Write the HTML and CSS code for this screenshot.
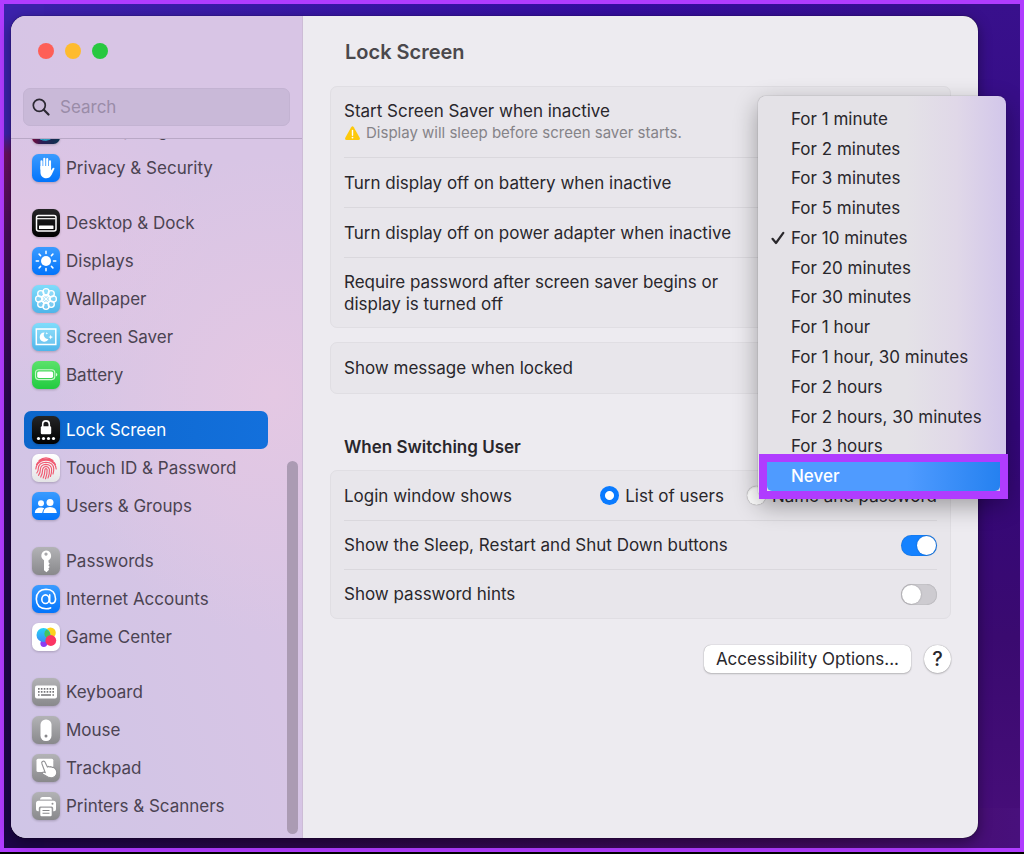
FILE: index.html
```html
<!DOCTYPE html>
<html lang="en">
<head>
<meta charset="utf-8">
<meta name="viewport" content="width=device-width, initial-scale=1">
<title>Lock Screen</title>
<link rel="stylesheet" href="styles.css">
</head>
<body>
<svg class="defs" width="0" height="0" aria-hidden="true">
  <defs>
    <linearGradient id="blue" x1="0" y1="0" x2="0" y2="1"><stop offset="0" stop-color="#3a9bff"/><stop offset="1" stop-color="#0274fb"/></linearGradient>
    <linearGradient id="cyan" x1="0" y1="0" x2="0" y2="1"><stop offset="0" stop-color="#80dcfb"/><stop offset="1" stop-color="#4fb5ea"/></linearGradient>
    <linearGradient id="green" x1="0" y1="0" x2="0" y2="1"><stop offset="0" stop-color="#5be26b"/><stop offset="1" stop-color="#22cb40"/></linearGradient>
    <linearGradient id="gray" x1="0" y1="0" x2="0" y2="1"><stop offset="0" stop-color="#b3b3b6"/><stop offset="1" stop-color="#89898c"/></linearGradient>
    <linearGradient id="black" x1="0" y1="0" x2="0" y2="1"><stop offset="0" stop-color="#252527"/><stop offset="1" stop-color="#000"/></linearGradient>
    <linearGradient id="white" x1="0" y1="0" x2="0" y2="1"><stop offset="0" stop-color="#fff"/><stop offset="1" stop-color="#e4e4e6"/></linearGradient>
    <linearGradient id="siri" x1="0" y1="0" x2="1" y2="0"><stop offset="0" stop-color="#7a0c3c"/><stop offset=".35" stop-color="#2b1b55"/><stop offset="1" stop-color="#0c3350"/></linearGradient>
    <linearGradient id="gc1" x1="0" y1="0" x2="0" y2="1"><stop offset="0" stop-color="#25d4f5"/><stop offset="1" stop-color="#3b8bf5"/></linearGradient>
  </defs>
</svg>
<div class="desktop">
  <div class="window">
    <aside class="sidebar">
      <header class="sidebar-head">
        <div class="lights">
          <button class="light red" aria-label="Close"></button>
          <button class="light yellow" aria-label="Minimize"></button>
          <button class="light green" aria-label="Zoom"></button>
        </div>
        <label class="search">
          <svg width="18" height="18" viewBox="0 0 18 18" fill="none" stroke="#2c2832" stroke-linecap="round" aria-hidden="true"><circle cx="7.3" cy="7.3" r="6" stroke-width="1.7"/><path d="M11.8 11.8 16.5 16.5" stroke-width="2.2"/></svg>
          <input type="search" placeholder="Search" aria-label="Search">
        </label>
      </header>
      <nav class="nav">
        <div class="group">
          <a class="item" href="#"><svg class="icon" viewBox="0 0 28 28"><rect width="28" height="28" rx="6.500" fill="url(#siri)"/><circle cx="14" cy="14" r="10" fill="#183c78"/><path d="M6 20q8 8 16-1M8 23q6 3 12-1" stroke="#2fa6c8" fill="none"/></svg>Siri &amp; Spotlight</a>
          <a class="item" href="#"><svg class="icon" viewBox="0 0 28 28"><rect width="28" height="28" rx="6.500" fill="url(#blue)"/><g stroke="#fff" stroke-width="2.100" stroke-linecap="round"><path d="M9.500 15V7.200M12.300 13V4.800M15.200 13V5M18 14V7.200"/></g><path d="M8.450 12h10.600v4.500l1.500-2.200c.8-1.200 2.300-.6 1.800.7l-2.700 5.800c-1.300 2.500-3 3.500-5.400 3.500-3.600 0-5.800-2.500-5.800-6z" fill="#fff"/></svg>Privacy &amp; Security</a>
        </div>
        <div class="group">
          <a class="item" href="#"><svg class="icon" viewBox="0 0 28 28"><rect width="28" height="28" rx="6.500" fill="url(#black)"/><rect x="4.500" y="6.500" width="19.500" height="15.500" rx="2" fill="none" stroke="#fff" stroke-width="1.500"/><path d="M5 9.700h18.500" stroke="#fff" stroke-width="1.200"/><rect x="7" y="16.500" width="14.500" height="3.500" rx=".6" fill="#fff"/></svg>Desktop &amp; Dock</a>
          <a class="item" href="#"><svg class="icon" viewBox="0 0 28 28"><rect width="28" height="28" rx="6.500" fill="url(#blue)"/><circle cx="14" cy="14" r="5" fill="#fff"/><g stroke="#fff" stroke-width="1.500" stroke-linecap="round"><path d="M14 4.200v2.300M14 21.500v2.300M4.200 14h2.300M21.500 14h2.300M7.100 7.100l1.500 1.500M19.400 19.400l1.500 1.500M7.100 20.900l1.500-1.500M19.400 8.600l1.500-1.500"/></g></svg>Displays</a>
          <a class="item" href="#"><svg class="icon" viewBox="0 0 28 28"><rect width="28" height="28" rx="6.500" fill="url(#cyan)"/><g fill="#ffffff30" stroke="#fff" stroke-width="1.300"><circle cx="14" cy="6.700" r="3.100"/><circle cx="19.200" cy="8.800" r="3.100"/><circle cx="21.300" cy="14" r="3.100"/><circle cx="19.200" cy="19.200" r="3.100"/><circle cx="14" cy="21.300" r="3.100"/><circle cx="8.800" cy="19.200" r="3.100"/><circle cx="6.700" cy="14" r="3.100"/><circle cx="8.800" cy="8.800" r="3.100"/><circle cx="14" cy="14" r="3.500"/><path d="M14 9v10M9 14h10M10.500 10.500l7 7M17.500 10.500l-7 7" stroke-width=".9"/></g></svg>Wallpaper</a>
          <a class="item" href="#"><svg class="icon" viewBox="0 0 28 28"><rect width="28" height="28" rx="6.500" fill="url(#cyan)"/><rect x="4.300" y="6" width="19.500" height="15.500" fill="#ffffff20" stroke="#fff" stroke-width="1.500"/><path d="M12.500 9.500a4.600 4.600 0 1 0 4 6.500 4.200 4.200 0 0 1-4-6.500z" fill="#fff"/><path d="M18.700 11.700l.7 1.700 1.700.7-1.700.7-.7 1.700-.7-1.700-1.700-.7 1.700-.7zM14.800 9l.4.900.9.4-.9.400-.4.900-.4-.9-.9-.4.900-.4z" fill="#fff"/></svg>Screen Saver</a>
          <a class="item" href="#"><svg class="icon" viewBox="0 0 28 28"><rect width="28" height="28" rx="6.500" fill="url(#green)"/><rect x="3.500" y="8.800" width="19.300" height="9.800" rx="3" fill="none" stroke="#c9f6ce" stroke-width="1.100"/><rect x="5.200" y="10.400" width="15.900" height="6.600" rx="1.700" fill="#fff"/><path d="M24 12v3.400q1.300-.4 1.300-1.700T24 12z" fill="#d8f8dc"/></svg>Battery</a>
        </div>
        <div class="group">
          <a class="item active" href="#" aria-current="page"><svg class="icon" viewBox="0 0 28 28"><rect width="28" height="28" rx="6.500" fill="url(#black)"/><path d="M10.700 11V8.200a3.300 3.300 0 0 1 6.600 0V11" fill="none" stroke="#fff" stroke-width="1.600"/><rect x="8.800" y="10.300" width="10.400" height="8" rx="1.300" fill="#fff"/><g fill="#fff"><circle cx="6.500" cy="22.500" r="1.600"/><circle cx="11.500" cy="22.500" r="1.600"/><circle cx="16.500" cy="22.500" r="1.600"/><circle cx="21.500" cy="22.500" r="1.600"/></g></svg>Lock Screen</a>
          <a class="item" href="#"><svg class="icon" viewBox="0 0 28 28"><rect width="28" height="28" rx="6.500" fill="url(#white)"/><g fill="none" stroke="#f05a72" stroke-width="1.150" stroke-linecap="round"><path d="M7 6.500q7-5.500 14 0M4.500 10.500q1-2 3-3.300 6.500-4 13 0 2 1.300 3 3.300M3.800 15q0-3 2-5.200 3.500-3.600 8.200-3.600t8.200 3.600q2 2.200 2 5.200M4.800 19q1.600-2 1.500-4.500.4-6 7.700-6.200 7.300.2 7.700 6.200.2 2.500-.7 5.500M6.500 21.300q2-2.800 1.900-6.300.6-4.400 5.600-4.600 5 .2 5.600 4.600.2 4-1.200 7.500M8.700 23q2-3.500 1.900-7.500.6-2.800 3.400-3 2.800.2 3.400 3 .3 4.500-1.400 8.500M11.200 24q1.800-4 1.700-8.300.3-1 1.100-1.100.8.100 1.100 1.100.2 4.500-1.600 9"/></g></svg>Touch ID &amp; Password</a>
          <a class="item" href="#"><svg class="icon" viewBox="0 0 28 28"><rect width="28" height="28" rx="6.500" fill="url(#blue)"/><g fill="#fff"><circle cx="9" cy="11.300" r="3"/><path d="M2.800 21q.2-5.500 6.200-5.500 2 0 3.300.8Q10.500 18 10.200 21z"/><circle cx="18" cy="10.500" r="3.500"/><path d="M11.300 21q.3-6 6.700-6t6.800 6z"/></g></svg>Users &amp; Groups</a>
        </div>
        <div class="group">
          <a class="item" href="#"><svg class="icon" viewBox="0 0 28 28"><rect width="28" height="28" rx="6.500" fill="url(#gray)"/><path fill-rule="evenodd" d="M14 3.500a5.200 5.200 0 0 1 2.500 9.700v2.100l1.200 1.400-1.300 1.600 1.300 1.600-1.300 1.500.6 1.300-2.500 2.500-2.500-2v-10A5.200 5.200 0 0 1 14 3.500zm0 2a1.600 1.600 0 1 0 .01 0z" fill="#fff"/></svg>Passwords</a>
          <a class="item" href="#"><svg class="icon" viewBox="0 0 28 28"><rect width="28" height="28" rx="6.500" fill="url(#blue)"/><g fill="none" stroke="#fff" stroke-width="1.600" stroke-linecap="round"><ellipse cx="13.500" cy="14.200" rx="3.700" ry="4.300"/><path d="M17.700 9.900v6.300q.2 2.400 2.400 2.200 3.300-.4 3.500-4.500Q23.300 4.300 14 4.200 4.500 4.500 4.300 14q.2 9.300 9.800 9.700 2.400 0 4.500-.8"/></g></svg>Internet Accounts</a>
          <a class="item" href="#"><svg class="icon" viewBox="0 0 28 28"><rect width="28" height="28" rx="6.500" fill="#fff"/><circle cx="18.500" cy="9.800" r="5.300" fill="#fbd21d"/><circle cx="11.800" cy="20.500" r="3.400" fill="#8d3cf0"/><circle cx="11.500" cy="12" r="7" fill="url(#gc1)"/><path d="M14.500 6.500a7 7 0 0 1 3.600 7.500 6.500 6.500 0 0 1-3.600 1 5.300 5.300 0 0 1 0-8.500z" fill="#42c560"/><circle cx="18.800" cy="17.500" r="5.400" fill="#fb3564"/></svg>Game Center</a>
        </div>
        <div class="group">
          <a class="item" href="#"><svg class="icon" viewBox="0 0 28 28"><rect width="28" height="28" rx="6.500" fill="url(#gray)"/><rect x="3" y="7.500" width="22" height="13" rx="2" fill="#fff"/><path d="M6 10.900h16M6 13.900h16" stroke="#77777a" stroke-width="1.600" stroke-dasharray="1.600 1.280"/><path d="M6 17h1.600M9 17h10M20.400 17H22" stroke="#77777a" stroke-width="1.500"/></svg>Keyboard</a>
          <a class="item" href="#"><svg class="icon" viewBox="0 0 28 28"><rect width="28" height="28" rx="6.500" fill="url(#gray)"/><rect x="8.500" y="3.500" width="11" height="21.500" rx="5.200" fill="#fff"/><circle cx="14" cy="20" r="1.500" fill="#88888b"/></svg>Mouse</a>
          <a class="item" href="#"><svg class="icon" viewBox="0 0 28 28"><rect width="28" height="28" rx="6.500" fill="url(#gray)"/><rect x="4.500" y="4.800" width="16.800" height="13.200" rx="1.500" fill="#fff"/><path d="M10.500 7.500c1.300-.8 2.200 0 2.700 1l2.200 4.400 1-.5 1.300.5 1.200-.3 1.300.8 1.200-.1c2.500 1.500 3.800 4.400 3.100 7-1.500 3.700-5.200 4.200-8.700 2.600l-5.200-3c-.8-1.400.5-2.300 2.600-1.400L10 10c-.5-1-.3-2 .5-2.500z" fill="#fff" stroke="#929295" stroke-width="1.100"/></svg>Trackpad</a>
          <a class="item" href="#"><svg class="icon" viewBox="0 0 28 28"><rect width="28" height="28" rx="6.500" fill="url(#gray)"/><path d="M8 7.500q0-2.500 2.300-2.500h7.400Q20 5 20 7.500zM6.500 8.800h15q2.500 0 2.500 2.500v6q0 2-2 2h-.8v-3.200q0-1.500-1.500-1.500H8.300q-1.500 0-1.500 1.500v3.200H6q-2 0-2-2v-6q0-2.500 2.500-2.500z" fill="#fff"/><circle cx="20.500" cy="11.700" r="1" fill="#929295"/><rect x="8.300" y="15.700" width="11.400" height="8.500" rx="1.200" fill="#fff"/><path d="M10.500 18.500h7M10.500 21.300h7" stroke="#88888b" stroke-width="1.100"/></svg>Printers &amp; Scanners</a>
        </div>
      </nav>
      <div class="scrollbar"></div>
    </aside>
    <main class="main">
      <h1>Lock Screen</h1>
      <section class="panel">
        <div class="row tall">
          <div>
            <div class="label">Start Screen Saver when inactive</div>
            <div class="note"><svg width="17" height="15" viewBox="0 0 17 15" aria-hidden="true"><path d="M7.200 1.200q1.300-1.800 2.600 0l5.900 10.500q.8 2-1.300 2.300H2.600Q.5 13.700 1.300 11.700z" fill="#fdc90a"/><path d="M8.500 4.500v4.700" stroke="#fff" stroke-width="1.400" stroke-linecap="round"/><circle cx="8.500" cy="11.600" r=".9" fill="#fff"/></svg>Display will sleep before screen saver starts.</div>
          </div>
        </div>
        <div class="row">Turn display off on battery when inactive</div>
        <div class="row">Turn display off on power adapter when inactive</div>
        <div class="row tall"><div class="wrap">Require password after screen saver begins or display is turned off</div></div>
      </section>
      <section class="panel"><div class="row">Show message when locked</div></section>
      <h2>When Switching User</h2>
      <section class="panel compact">
        <div class="row"><span>Login window shows</span>
          <div class="radios">
            <label><input type="radio" name="login" checked>List of users</label>
            <label><input type="radio" name="login">Name and password</label>
          </div>
        </div>
        <label class="row">Show the Sleep, Restart and Shut Down buttons<input class="switch" type="checkbox" checked></label>
        <label class="row">Show password hints<input class="switch" type="checkbox"></label>
      </section>
      <div class="actions">
        <button class="push">Accessibility Options...</button>
        <button class="help" aria-label="Help">?</button>
      </div>
    </main>
    <div class="menu" role="menu">
      <button role="menuitemradio">For 1 minute</button>
      <button role="menuitemradio">For 2 minutes</button>
      <button role="menuitemradio">For 3 minutes</button>
      <button role="menuitemradio">For 5 minutes</button>
      <button role="menuitemradio" aria-checked="true"><svg class="check" width="14" height="14" viewBox="0 0 14 14" aria-hidden="true"><path d="M1.500 7.800 5 12 12.300 1.800" fill="none" stroke="#2a282c" stroke-width="2.200" stroke-linecap="round" stroke-linejoin="round"/></svg>For 10 minutes</button>
      <button role="menuitemradio">For 20 minutes</button>
      <button role="menuitemradio">For 30 minutes</button>
      <button role="menuitemradio">For 1 hour</button>
      <button role="menuitemradio">For 1 hour, 30 minutes</button>
      <button role="menuitemradio">For 2 hours</button>
      <button role="menuitemradio">For 2 hours, 30 minutes</button>
      <button role="menuitemradio">For 3 hours</button>
      <button role="menuitemradio" class="selected">Never</button>
      <div class="marker"></div>
    </div>
  </div>
</div>
</body>
</html>
```
FILE: styles.css
```css
* { box-sizing: border-box; }
body {
  margin: 0;
  padding-bottom: 2px;
  height: 100vh;
  min-height: 854px;
  background: #000;
  color: #29272c;
  font: 17px/22px Inter, "Liberation Sans", sans-serif;
}
button, input { font: inherit; color: inherit; }
button { border: 0; background: none; padding: 0; }
.defs { position: absolute; }
.desktop {
  height: 100%;
  display: flex;
  padding: 12px 42px 10px 7px;
  border: 4px solid #b03cff;
  background:
    linear-gradient(180deg, #3c22ac 0, #3c22ac 130px, #6a1060 150px, #4a0c5c 230px, #26074e 420px, #1c0548 100%) 0 0 / 40px 100% no-repeat,
    linear-gradient(90deg, #1c0548, #2b0649 30%, #430a62 80%, #48107c) 0 100% / 100% 40px no-repeat,
    linear-gradient(180deg, #38108c, #33077a 50%, #3a0a70 75%, #480e7a) 100% 0 / 60px 100% no-repeat,
    linear-gradient(90deg, #3c22ac, #350da0 60%, #38108c);
}
.window {
  position: relative;
  flex: 1;
  display: flex;
  min-width: 0;
  border-radius: 15px;
  background: #edebf0;
  box-shadow: 0 0 1px #000, 0 4px 14px #0006;
}
.sidebar {
  position: relative;
  flex: none;
  width: 292px;
  display: flex;
  flex-direction: column;
  border-right: 1px solid #cdbcd6;
  border-radius: 15px 0 0 15px;
  background:
    radial-gradient(ellipse 220px 240px at 90% 46%, #e4c8e3, #e4c8e300),
    radial-gradient(ellipse 200px 150px at 0 28%, #e2c5e4, #e2c5e400),
    linear-gradient(70deg, #cfc5e6, #d8c5e5 60%);
}
.sidebar-head {
  display: flex;
  flex-direction: column;
  gap: 29px;
  padding: 27px 12px 12px;
  border-bottom: 1px solid #b9a8c6;
}
.lights { display: flex; gap: 11px; padding-left: 15px; }
.light { width: 16px; height: 16px; border-radius: 50%; }
.red { background: #fe5f57; }
.yellow { background: #febb2e; }
.green { background: #28c840; }
.search {
  display: flex;
  align-items: center;
  gap: 10px;
  height: 38px;
  padding: 0 8px;
  border: 1px solid #c3b3d2;
  border-radius: 7px;
  background: #c9b9d8;
}
.search input {
  flex: 1;
  min-width: 0;
  padding: 0;
  border: 0;
  outline: 0;
  background: none;
}
.search input::placeholder { color: #9a8ca8; opacity: 1; }
.nav {
  flex: 1;
  min-height: 0;
  overflow: hidden;
  display: flex;
  flex-direction: column;
  justify-content: flex-end;
  gap: 17px;
  padding: 0 34px 13px 13px;
}
.item {
  display: flex;
  align-items: center;
  gap: 6px;
  height: 38px;
  padding-left: 8px;
  border-radius: 7px;
  color: #4b4352;
  text-decoration: none;
  white-space: nowrap;
}
.item.active { background: linear-gradient(90deg, #0c66cb, #1370dc); color: #fff; }
.icon { flex: none; width: 28px; height: 28px; filter: drop-shadow(0 1px 1px #0003); }
.scrollbar {
  position: absolute;
  right: 4px;
  bottom: 4px;
  width: 11px;
  height: 373px;
  border-radius: 6px;
  background: #ab9bb3;
}
.main { flex: 1; min-width: 0; padding: 25px 27px; }
h1 { margin: 0 0 23px; padding-left: 15px; font-size: 20px; line-height: 22px; font-weight: 600; color: #4a484c; }
h2 { margin: 42px 0 12px; padding-left: 14px; font-size: 17px; line-height: 22px; font-weight: 600; }
.panel {
  margin-bottom: 14px;
  padding: 0 13px;
  border: 1px solid #e0dee3;
  border-radius: 7px;
  background: #e8e6eb;
}
.row {
  display: flex;
  align-items: center;
  justify-content: space-between;
  min-height: 50px;
  white-space: nowrap;
}
.row + .row { border-top: 1px solid #dad8dd; }
.row.tall { min-height: 70px; }
.compact .row { min-height: 49px; }
.wrap { width: 390px; white-space: normal; }
.note { display: flex; align-items: center; gap: 5px; font-size: 15px; color: #858388; }
.radios { display: flex; gap: 23px; }
.radios label { display: flex; align-items: center; gap: 6px; }
.radios input {
  appearance: none;
  width: 19px;
  height: 19px;
  margin: 0;
  border-radius: 50%;
  background: #fff;
  box-shadow: 0 0 1px #0008, inset 0 1px 2px #0002;
}
.radios input:checked { background: radial-gradient(circle, #fff 4px, #0a7bff 5px); box-shadow: none; }
.switch {
  appearance: none;
  display: flex;
  width: 36px;
  height: 21px;
  margin: 0;
  padding: 1px;
  border-radius: 11px;
  background: #cdcbd0;
  box-shadow: inset 0 0 1px #0006;
}
.switch::before { content: ""; width: 19px; height: 19px; border-radius: 50%; background: #fff; box-shadow: 0 0 2px #0004; }
.switch:checked { justify-content: flex-end; background: #1482ff; }
.actions { display: flex; justify-content: flex-end; gap: 13px; padding-top: 12px; }
.push { height: 28px; padding: 0 12px; border-radius: 7px; background: #fff; box-shadow: 0 0 1px #0006, 0 1px 2px #0003; }
.help { width: 27px; height: 28px; border-radius: 50%; background: #fff; font-size: 20px; font-weight: 500; box-shadow: 0 0 1px #0006, 0 1px 2px #0003; }
.menu {
  position: absolute;
  top: 80px;
  right: -28px;
  width: 248px;
  height: 402px;
  display: grid;
  grid-auto-rows: 1fr;
  padding: 8px 6px 7px 9px;
  border-radius: 8px;
  background: linear-gradient(90deg, #e4e2e7 60%, #e0d8e8 80%, #d2c6ea);
  box-shadow: 0 0 1px #0008, 0 8px 24px #0005;
}
.menu button { position: relative; padding-left: 24px; text-align: left; white-space: nowrap; }
.menu .selected { border-radius: 0 0 5px 5px; background: linear-gradient(90deg, #4f9bff 60%, #2581f0); color: #fff; font-weight: 500; }
.check { position: absolute; left: 4px; top: 8px; }
.marker {
  position: absolute;
  left: 1px;
  right: -2px;
  bottom: -1px;
  height: 45px;
  border: 8px solid #b03cff;
}
```
